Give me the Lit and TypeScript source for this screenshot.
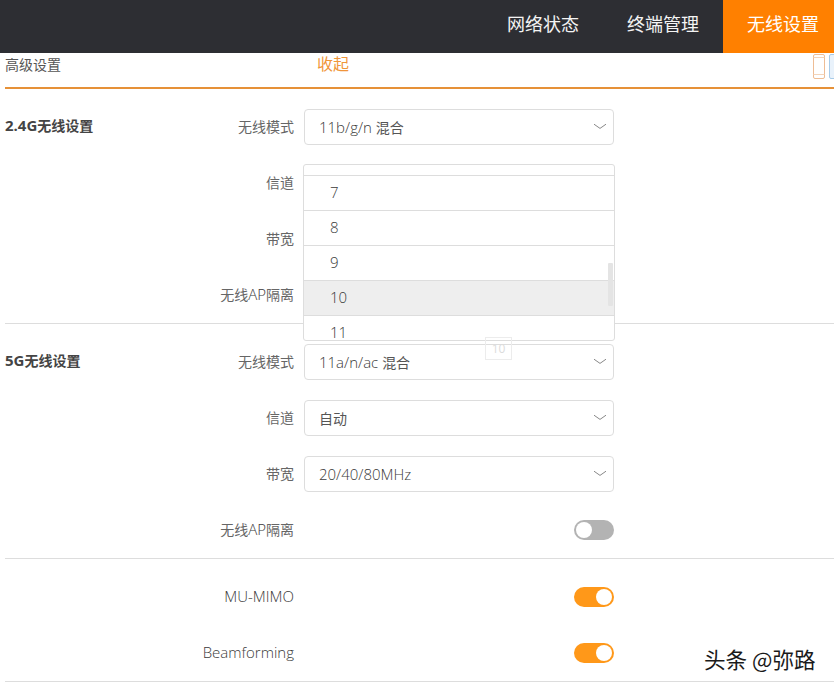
import { LitElement, html, css } from "lit";
import { customElement } from "lit/decorators.js";

const chevron = html`<svg class="chev" width="14" height="7" viewBox="0 0 14 7"><path d="M1 1.2 L7 5.4 L13 1.2" fill="none" stroke="#888" stroke-width="1"/></svg>`;

/* Latin runs are set a size larger than the CJK runs, as in the original's font pairing. */
const mixed = (text: string) =>
  text
    .split(/([A-Za-z0-9\/.\- ]+)/)
    .filter((p) => p)
    .map((p) => (/^[A-Za-z0-9\/.\- ]+$/.test(p) ? html`<span class="lat">${p}</span>` : p));

@customElement("app-root")
export class AppRoot extends LitElement {
  static styles = css`
    :host {
      display: block;
      width: 834px;
      height: 689px;
      overflow: hidden;
      position: relative;
      background: #fff;
      color: #555;
      font-family: "Open Sans", "Noto Sans CJK SC", sans-serif;
      font-size: 14px;
    }
    .lat {
      font-size: 15px;
      font-weight: 300;
      line-height: 1;
      color: #3a3a3a;
    }
    .nav {
      height: 53px;
      background: #2d2e33;
      display: flex;
      justify-content: flex-end;
      align-items: stretch;
    }
    .tab {
      display: flex;
      align-items: center;
      color: #f4f4f4;
      font-size: 18px;
      padding: 0 24px 7px;
      box-sizing: border-box;
    }
    .tab.active {
      background: #ff8000;
      color: #fff;
      width: 111px;
      padding: 0 0 7px 24px;
    }
    .body {
      margin-left: 5px;
    }
    .adv {
      height: 34px;
      border-bottom: 2px solid #e69138;
      display: flex;
      align-items: flex-start;
      position: relative;
      overflow: hidden;
    }
    .adv-title {
      width: 312px;
      line-height: 23px;
      color: #555;
    }
    .adv-toggle {
      color: #f0953a;
      font-size: 16px;
      line-height: 23px;
    }
    .devices {
      margin-left: auto;
      display: flex;
      gap: 3px;
      padding: 1px 0 0 0;
      width: 21px;
      flex: none;
      overflow: hidden;
    }
    .section {
      padding-top: 10px;
      border-bottom: 1px solid #ddd;
      position: relative;
    }
    .sec-title {
      position: absolute;
      left: 0;
      top: 27px;
      font-weight: 700;
      line-height: 20px;
      color: #444;
    }
    .sec-title .lat {
      font-weight: 700;
      color: #444;
    }
    .row {
      height: 56px;
      display: flex;
      align-items: center;
      position: relative;
    }
    .label {
      width: 289px;
      text-align: right;
      flex: none;
      line-height: 20px;
      color: #666;
    }
    .control {
      margin-left: 10px;
      width: 310px;
      display: flex;
      justify-content: flex-end;
      position: relative;
    }
    .select {
      width: 310px;
      height: 36px;
      box-sizing: border-box;
      border: 1px solid #ddd;
      border-radius: 4px;
      display: flex;
      align-items: center;
      justify-content: space-between;
      padding: 0 6px 0 14px;
      color: #555;
      background: #fff;
    }
    .chev {
      display: block;
      margin-top: -2px;
    }
    .switch {
      width: 40px;
      height: 20px;
      border-radius: 10px;
      background: #b3b3b3;
      display: flex;
      align-items: center;
      padding: 0 2px;
      box-sizing: border-box;
    }
    .switch.on {
      background: #ff9819;
      justify-content: flex-end;
    }
    .knob {
      width: 16px;
      height: 16px;
      border-radius: 50%;
      background: #fff;
    }
    .menu {
      position: absolute;
      left: -1px;
      top: -1px;
      width: 312px;
      height: 177px;
      box-sizing: border-box;
      border: 1px solid #ddd;
      border-radius: 3px;
      background: #fff;
      overflow: hidden;
      z-index: 3;
    }
    .opt-stub {
      height: 10px;
      border-bottom: 1px solid #ddd;
    }
    .opt {
      height: 35px;
      box-sizing: border-box;
      border-bottom: 1px solid #ddd;
      padding: 0 0 0 26px;
      line-height: 33px;
      font-size: 15px;
      font-weight: 300;
      color: #3a3a3a;
    }
    .opt.sel {
      background: #eee;
    }
    .thumb {
      position: absolute;
      right: 1px;
      top: 98px;
      width: 5px;
      height: 43px;
      background: #e4e4e4;
      border-radius: 1px;
    }
    .tip {
      position: absolute;
      left: 485px;
      top: 337px;
      width: 27px;
      height: 23px;
      box-sizing: border-box;
      border: 1px solid #ececec;
      color: #dcdcdc;
      font-size: 12px;
      line-height: 21px;
      text-align: center;
      z-index: 4;
    }
    .mark {
      position: absolute;
      left: 704px;
      top: 644px;
      font-size: 21.6px;
      line-height: 30px;
      color: #1a1a1a;
      font-family: "Noto Sans CJK SC", sans-serif;
      text-shadow: 0 0 2px #fff;
      white-space: nowrap;
      z-index: 5;
    }
  `;

  private sel(text: string) {
    return html`<div class="select"><span>${mixed(text)}</span>${chevron}</div>`;
  }

  private sw(on: boolean) {
    return html`<div class="switch ${on ? "on" : ""}"><div class="knob"></div></div>`;
  }

  private row(label: string, control: unknown) {
    return html`<div class="row"><div class="label">${mixed(label)}</div><div class="control">${control}</div></div>`;
  }

  render() {
    const menu = html`<div class="menu">
      <div class="opt-stub"></div>
      ${["7", "8", "9", "10", "11"].map(
        (o) => html`<div class="opt ${o === "10" ? "sel" : ""}">${o}</div>`
      )}
      <div class="thumb"></div>
    </div>`;
    return html`
      <div class="nav">
        <div class="tab">网络状态</div>
        <div class="tab">终端管理</div>
        <div class="tab active">无线设置</div>
      </div>
      <div class="body">
        <div class="adv">
          <div class="adv-title">高级设置</div>
          <div class="adv-toggle">收起</div>
          <div class="devices">
            <svg width="13" height="25" viewBox="0 0 13 25" style="flex:none">
              <rect x="0.5" y="0.5" width="11" height="24" rx="1.5" fill="#fff" stroke="#eebd95"/>
              <path d="M0.5 3.5H11.5M0.5 20.5H11.5" stroke="#f3d4ba"/>
            </svg>
            <svg width="13" height="25" viewBox="0 0 13 25" style="flex:none">
              <rect x="0.5" y="0.5" width="12" height="24" rx="1.5" fill="#e9f2fb" stroke="#a8cbe8"/>
            </svg>
          </div>
        </div>
        <div class="section">
          <div class="sec-title">${mixed("2.4G无线设置")}</div>
          ${this.row("无线模式", this.sel("11b/g/n 混合"))}
          ${this.row("信道", html`${this.sel("自动")}${menu}`)}
          ${this.row("带宽", this.sel("20/40MHz"))}
          ${this.row("无线AP隔离", this.sw(false))}
        </div>
        <div class="section">
          <div class="sec-title">${mixed("5G无线设置")}</div>
          ${this.row("无线模式", this.sel("11a/n/ac 混合"))}
          ${this.row("信道", this.sel("自动"))}
          ${this.row("带宽", this.sel("20/40/80MHz"))}
          ${this.row("无线AP隔离", this.sw(false))}
        </div>
        <div class="section">
          ${this.row("MU-MIMO", this.sw(true))}
          ${this.row("Beamforming", this.sw(true))}
        </div>
      </div>
      <div class="tip">10</div>
      <div class="mark">头条 @弥路</div>
    `;
  }
}
